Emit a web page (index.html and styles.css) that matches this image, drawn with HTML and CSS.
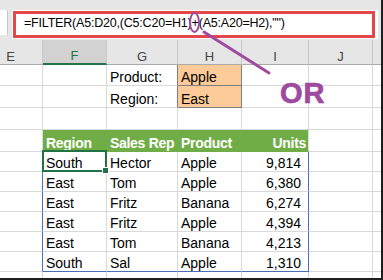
FILE: index.html
```html
<!DOCTYPE html>
<html lang="en">
<head>
    <meta charset="UTF-8">
    <title>FILTER with OR logic</title>
    <link rel="stylesheet" href="styles.css">
</head>
<body>
    <div class="window">
        <!-- Formula bar -->
        <div class="formula-bar">
            <div class="name-box"></div>
            <div class="formula-field">
                <div class="formula-text">=FILTER(A5:D20,(C5:C20=H1)<span class="circled">+</span>(A5:A20=H2),"")</div>
            </div>
        </div>

        <!-- Worksheet -->
        <div class="sheet">
            <table class="grid">
                <colgroup>
                    <col class="c-std">
                    <col class="c-std">
                    <col class="c-wide">
                    <col class="c-std">
                    <col class="c-units">
                    <col class="c-std">
                    <col class="c-std">
                </colgroup>
                <tr class="row-heads">
                    <th>E</th><th class="sel">F</th><th>G</th><th>H</th><th>I</th><th>J</th><th></th>
                </tr>
                <tr class="row-1">
                    <td></td><td></td><td class="label">Product:</td><td class="input">Apple</td><td></td><td></td><td></td>
                </tr>
                <tr class="row-2">
                    <td></td><td></td><td class="label">Region:</td><td class="input">East</td><td></td><td></td><td></td>
                </tr>
                <tr class="row-3">
                    <td></td><td></td><td></td><td></td><td></td><td></td><td></td>
                </tr>
                <tr class="row-thead">
                    <td></td><td class="th">Region</td><td class="th">Sales Rep</td><td class="th">Product</td><td class="th num">Units</td><td></td><td></td>
                </tr>
                <tr class="row-data">
                    <td class="edge"></td><td class="active">South</td><td>Hector</td><td>Apple</td><td class="num last">9,814</td><td></td><td></td>
                </tr>
                <tr class="row-data">
                    <td class="edge"></td><td>East</td><td>Tom</td><td>Apple</td><td class="num last">6,380</td><td></td><td></td>
                </tr>
                <tr class="row-data">
                    <td class="edge"></td><td>East</td><td>Fritz</td><td>Banana</td><td class="num last">6,274</td><td></td><td></td>
                </tr>
                <tr class="row-data">
                    <td class="edge"></td><td>East</td><td>Fritz</td><td>Apple</td><td class="num last">4,394</td><td></td><td></td>
                </tr>
                <tr class="row-data">
                    <td class="edge"></td><td>East</td><td>Tom</td><td>Banana</td><td class="num last">4,213</td><td></td><td></td>
                </tr>
                <tr class="row-data row-end">
                    <td class="edge"></td><td>South</td><td>Sal</td><td>Apple</td><td class="num last">1,310</td><td></td><td></td>
                </tr>
                <tr class="row-cut">
                    <td></td><td></td><td></td><td></td><td></td><td></td><td></td>
                </tr>
            </table>
        </div>

        <!-- Annotation pointer drawn over the sheet -->
        <svg class="callout" width="383" height="280" viewBox="0 0 383 280">
            <line x1="204" y1="32" x2="269" y2="73" stroke="#9e4aa0" stroke-width="3" stroke-linecap="round"/>
        </svg>
        <div class="callout-text">OR</div>
    </div>
</body>
</html>
```

FILE: styles.css
```css
body {
    margin: 0;
}

.window {
    position: relative;
    width: 381px;
    height: 278px;
    overflow: hidden;
    background-color: #fff;
    border-right: 2px solid #1e1e1e;
    border-bottom: 2px solid #1e1e1e;
    font-family: "Liberation Sans", Arial, sans-serif;
}

/* Formula bar */
.formula-bar {
    display: flex;
    align-items: flex-start;
    height: 40px;
    padding-top: 10px;
    box-sizing: border-box;
    background-color: #e6e6e6;
}

.name-box {
    width: 7px;
    height: 25px;
    background-color: #fff;
    border-right: 1px solid #c6c6c6;
}

.formula-field {
    width: 366px;
    height: 29px;
    margin-left: 4px;
    padding: 1px 3px 1px 1px;
    box-sizing: border-box;
    background-color: #fff;
}

.formula-text {
    height: 27px;
    padding-left: 8px;
    box-sizing: border-box;
    border: 3px solid #e4474a;
    font-size: 12.5px;
    line-height: 19px;
    letter-spacing: -0.2px;
    color: #000;
    white-space: nowrap;
}

/* Purple ring round the + sign */
.circled {
    position: relative;
}

.circled::after {
    content: "";
    position: absolute;
    left: 50%;
    top: 50%;
    width: 11px;
    height: 21px;
    margin-left: -6px;
    margin-top: -11px;
    box-sizing: border-box;
    border: 2.5px solid #9e4aa0;
    border-radius: 50%;
}

/* Worksheet grid */
.sheet {
    height: 238px;
    overflow: hidden;
}

.grid {
    margin-left: -21px;
    border-collapse: separate;
    border-spacing: 0;
    table-layout: fixed;
    width: 458px;
}

.c-std { width: 64px; }
.c-wide { width: 71px; }
.c-units { width: 67px; }

.grid th,
.grid td {
    padding: 0 3px;
    border-right: 1px solid #d9d9d9;
    border-bottom: 1px solid #d9d9d9;
    vertical-align: bottom;
    white-space: nowrap;
    overflow: hidden;
}

.grid td {
    font-size: 14px;
    line-height: 16px;
    color: #000;
}

.row-heads { height: 25px; }
.row-1 { height: 21px; }
.row-2,
.row-3,
.row-thead { height: 22px; }
.row-data { height: 20px; }
.row-cut { height: 10px; }

.row-heads th {
    background-color: #e6e6e6;
    border-right-color: #c8c8c8;
    border-bottom-color: #ababab;
    font-size: 13px;
    font-weight: normal;
    line-height: 15px;
    color: #444;
    text-align: center;
}

.row-heads th.sel {
    background-color: #d2d2d2;
    border-bottom: 2px solid #217346;
    color: #217346;
}

/* Criteria cells */
.label {
    padding-left: 4px;
}

.row-1 .label,
.row-2 .label {
    border-right-color: #7f7f7f;
}

.input {
    background-color: #fdca99;
    color: #3f3f76;
    border-right-color: #7f7f7f !important;
    border-bottom-color: #7f7f7f !important;
}

/* Result table */
.grid td.th {
    background-color: #70ad47;
    border-right-color: #70ad47;
    border-bottom-color: #70ad47;
    color: #fff;
    font-weight: bold;
    letter-spacing: -0.3px;
}

.grid td.th.num {
    border-right-color: #d9d9d9;
    padding-right: 2px;
}

.num {
    text-align: right;
}

.row-data .num {
    padding-right: 7px;
}

.row-data .edge,
.row-data .last {
    border-right-color: #4a6fb5;
}

.row-end td:nth-child(n+2):nth-child(-n+5) {
    border-bottom-color: #4a6fb5;
}

/* Selected cell with fill handle */
.grid td.active {
    position: relative;
    overflow: visible;
}

.active::after {
    content: "";
    position: absolute;
    top: -2px;
    left: -1px;
    right: -1px;
    bottom: -1px;
    border: 2px solid #217346;
}

.active::before {
    content: "";
    position: absolute;
    right: -3px;
    bottom: -3px;
    width: 5px;
    height: 5px;
    background-color: #217346;
    border: 1px solid #fff;
    z-index: 1;
}

/* Purple annotation */
.callout {
    position: absolute;
    top: 0;
    left: 0;
    pointer-events: none;
}

.callout-text {
    position: absolute;
    top: 79px;
    left: 280px;
    font-size: 29px;
    font-weight: bold;
    line-height: 1;
    letter-spacing: 1px;
    color: #9e4aa0;
    -webkit-text-stroke: 0.7px #9e4aa0;
}
```
